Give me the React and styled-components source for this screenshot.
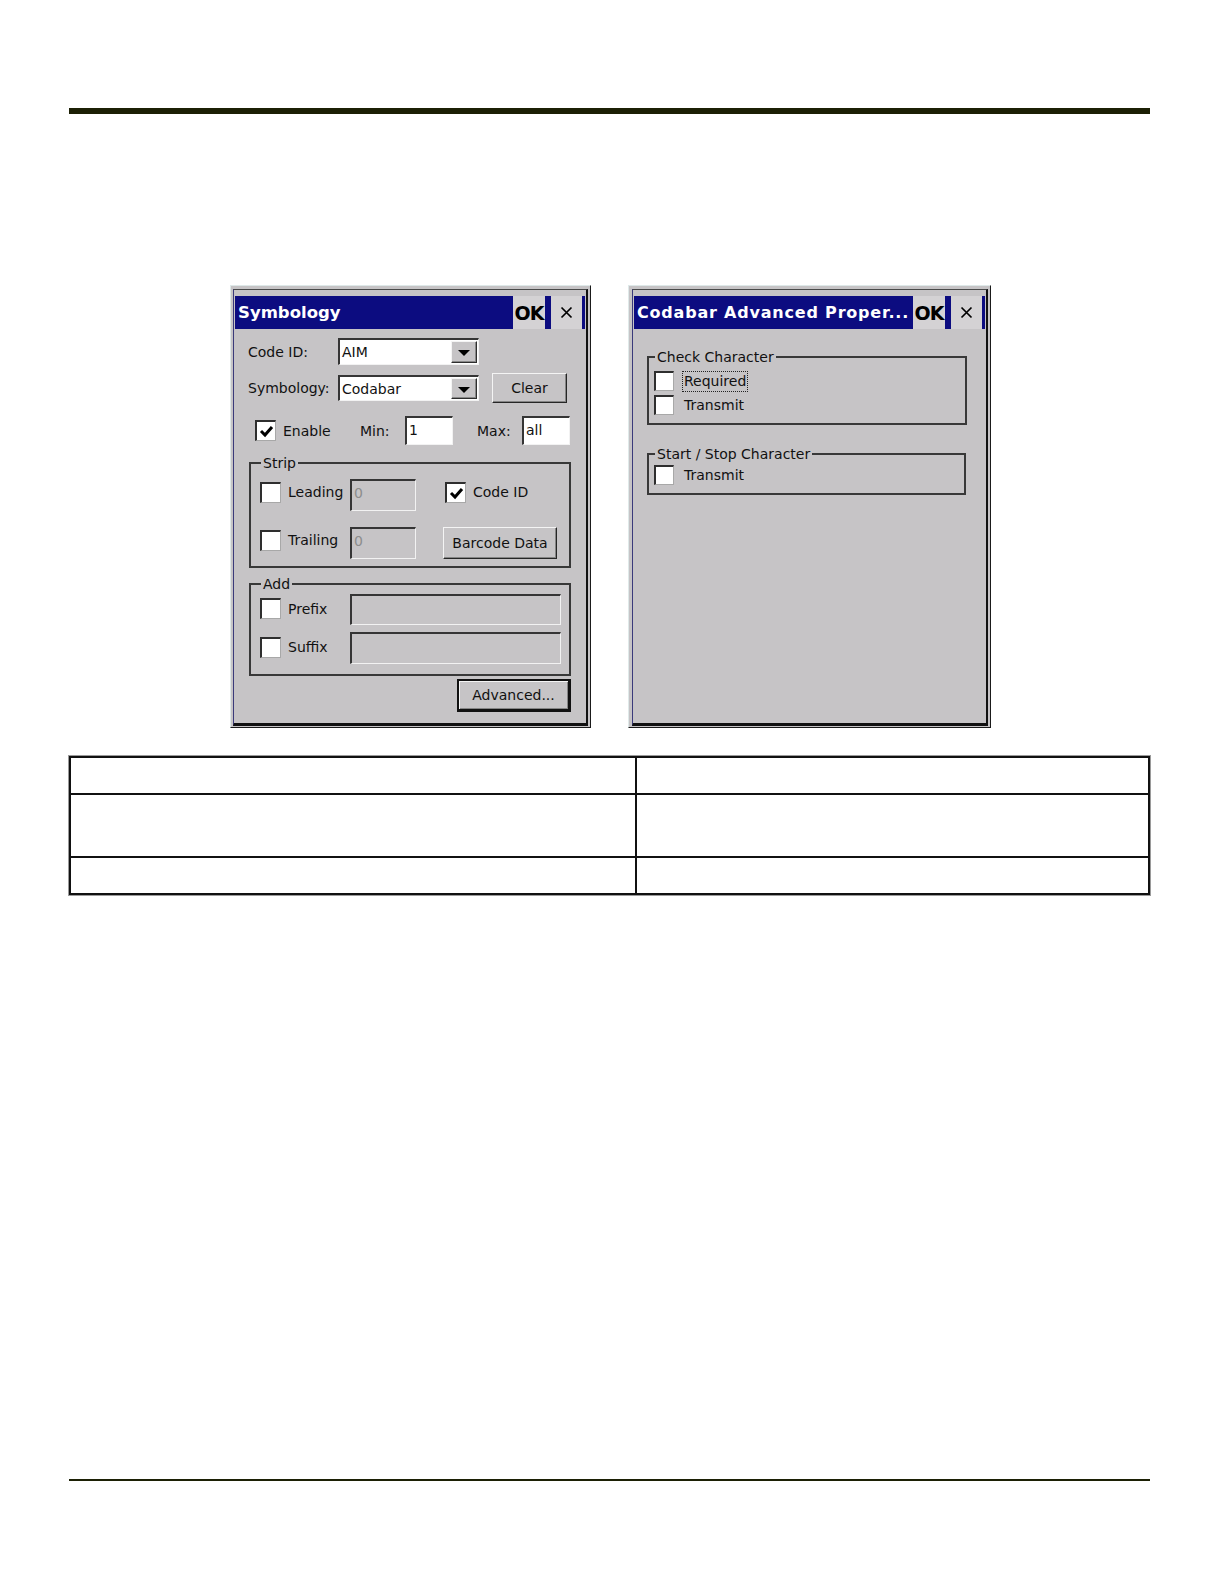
import React from 'react';
import styled, { createGlobalStyle, css } from 'styled-components';

const GlobalStyle = createGlobalStyle`
  html, body {
    margin: 0;
    padding: 0;
    background: #fff;
  }
  body {
    font-family: "DejaVu Sans", "Liberation Sans", sans-serif;
    color: #111;
  }
`;

const FACE = '#c6c4c6';

// page
const Page = styled.div`
  width: 1224px;
  height: 1584px;
  display: flex;
  flex-direction: column;
  background: #fff;
`;

const Rule = styled.div`
  margin: ${p => p.$mt}px 0 0 69px;
  width: 1081px;
  height: ${p => p.$h}px;
  background: #1c2005;
  flex-shrink: 0;
`;

const Shots = styled.div`
  display: flex;
  align-items: flex-start;
  gap: 37px;
  margin: 171px 0 0 230px;
`;

// window chrome
const Window = styled.div`
  box-sizing: border-box;
  width: ${p => p.$w}px;
  height: 443px;
  background: ${FACE};
  border: 1px solid;
  border-color: #dfe9e9 #1a1a1a #1a1a1a #dfe9e9;
  padding: 3px 2px 1px ${p => 2 + (p.$padLeft || 0)}px;
  display: flex;
`;

const Frame = styled.div`
  flex: 1;
  display: flex;
  flex-direction: column;
  border-style: solid;
  border-color: #4a4a4a #111 #111 #3a3a7a;
  border-width: 1px 2px 3px 1px;
  padding: 6px 1px 0 1px;
`;

const TitleBar = styled.div`
  display: flex;
  align-items: stretch;
  height: 33px;
  flex-shrink: 0;
  background: #0c0c80;
  padding: 0 3px 0 3px;
`;

const TitleText = styled.span`
  flex: 1;
  display: flex;
  align-items: center;
  color: #fff;
  font-size: ${p => p.$size || 16}px;
  font-weight: bold;
  letter-spacing: ${p => p.$spacing || 0}px;
  white-space: nowrap;
  overflow: hidden;
`;

const CapButton = styled.span`
  width: ${p => p.$w}px;
  margin-left: ${p => p.$ml}px;
  display: flex;
  align-items: center;
  justify-content: center;
  background: #d4d2d4;
  color: #000;
  font-size: 19px;
  font-weight: bold;
  letter-spacing: -1px;
  flex-shrink: 0;
`;

const Body = styled.div`
  flex: 1;
  display: flex;
  flex-direction: column;
`;

// controls
const FormRow = styled.div`
  display: flex;
  align-items: center;
  height: ${p => p.$h}px;
  margin: ${p => p.$mt || 0}px 0 0 ${p => p.$ml || 0}px;
`;

const Label = styled.span`
  flex-shrink: 0;
  width: ${p => (p.$w ? `${p.$w}px` : 'auto')};
  margin-left: ${p => p.$ml || 0}px;
  margin-bottom: ${p => (p.$lift ? p.$lift * 2 : 0)}px;
  font-size: 14px;
  white-space: nowrap;
  ${p => p.$focus && css`
    border: 1px dotted #222;
    padding: 0 1px;
    line-height: 19px;
  `}
`;

const sunken = css`
  box-sizing: border-box;
  border-style: solid;
  border-width: 2px 1px 1px 2px;
  border-color: #353535 #f2f2f2 #f2f2f2 #353535;
`;

const Combo = styled.div`
  ${sunken};
  width: 141px;
  height: ${p => p.$h}px;
  display: flex;
  background: #fff;
  flex-shrink: 0;
`;

const ComboText = styled.span`
  flex: 1;
  display: flex;
  align-items: center;
  padding-left: 2px;
  font-size: 14px;
`;

const ComboArrow = styled.span`
  width: 24px;
  margin: 1px 1px 1px 0;
  display: flex;
  align-items: center;
  justify-content: center;
  background: ${FACE};
  border: 1px solid;
  border-color: #f4f4f4 #2e2e2e #2e2e2e #f4f4f4;
  box-shadow: inset -1px -1px 0 #888;

  &::after {
    content: '';
    border-left: 6px solid transparent;
    border-right: 6px solid transparent;
    border-top: 6px solid #000;
    margin-top: 2px;
  }
`;

const Field = styled.div`
  ${sunken};
  width: ${p => p.$w}px;
  height: ${p => p.$h}px;
  flex-shrink: 0;
  padding: 4px 0 0 2px;
  font-size: 14px;
  background: ${p => (p.$disabled ? FACE : '#fff')};
  color: ${p => (p.$disabled ? '#8d8d8d' : '#111')};
`;

const Button = styled.div`
  box-sizing: border-box;
  width: ${p => p.$w}px;
  height: ${p => p.$h}px;
  margin-left: ${p => p.$ml || 0}px;
  flex-shrink: 0;
  display: flex;
  align-items: center;
  justify-content: center;
  font-size: 14px;
  background: ${FACE};
  border: 1px solid;
  border-color: #f4f4f4 #262626 #262626 #f4f4f4;
  box-shadow: inset -1px -1px 0 #858585;
  ${p => p.$default && css`
    border: 2px solid #111;
    border-right-width: 3px;
    border-bottom-width: 3px;
    box-shadow: inset 1px 1px 0 #f4f4f4, inset -1px -1px 0 #858585;
  `}
`;

const AdvancedWrap = styled.div`
  display: flex;
  justify-content: flex-end;
  margin: 3px 14px 0 0;
`;

const Box = styled.span`
  box-sizing: border-box;
  flex-shrink: 0;
  width: ${p => p.$size}px;
  height: ${p => p.$size}px;
  margin-left: ${p => p.$ml || 0}px;
  margin-bottom: ${p => (p.$lift ? p.$lift * 2 : 0)}px;
  display: flex;
  align-items: center;
  justify-content: center;
  background: #fff;
  border-style: solid;
  border-width: 2px 1px 1px 2px;
  border-color: #2e2e2e #a8a8a8 #a8a8a8 #2e2e2e;
`;

const CheckBox = ({ checked, size = 21, ml, lift }) => (
  <Box $size={size} $ml={ml} $lift={lift}>
    {checked && (
      <svg width="15" height="14" viewBox="0 0 15 14">
        <polyline points="2,7 6,11 13,3" fill="none" stroke="#000" strokeWidth="3" />
      </svg>
    )}
  </Box>
);

const Group = styled.fieldset`
  box-sizing: border-box;
  min-width: 0;
  width: ${p => p.$w}px;
  margin: ${p => p.$mt}px 0 0 ${p => p.$ml}px;
  padding: ${p => p.$pad};
  border: 2px solid #383838;
`;

const Legend = styled.legend`
  margin-left: 1px;
  padding: 0 2px;
  font-size: 14px;
  line-height: 16px;
`;

const CloseGlyph = () => (
  <svg width="13" height="13" viewBox="0 0 13 13">
    <path d="M1.5 1.5 L11.5 11.5 M11.5 1.5 L1.5 11.5" stroke="#000" strokeWidth="1.7" />
  </svg>
);

const TitleButtons = () => (
  <>
    <CapButton $w={32} $ml={0}>OK</CapButton>
    <CapButton $w={31} $ml={6}><CloseGlyph /></CapButton>
  </>
);

// table under the shots
const Table = styled.table`
  margin: 28px 0 0 69px;
  width: 1081px;
  border-collapse: collapse;
  table-layout: fixed;
  box-shadow: 0 0 0 1px #9a9a9a;
`;

const Cell = styled.td`
  height: ${p => p.$h}px;
  padding: 0;
  border: 2px solid #111;
  border-left-color: ${p => (p.$first ? '#111' : '#333')};
  border-left-width: ${p => (p.$first ? 2 : 1)}px;
`;

const SymbologyDialog = () => (
  <Window $w={361}>
    <Frame>
      <TitleBar>
        <TitleText $size={16.5}>Symbology</TitleText>
        <TitleButtons />
      </TitleBar>
      <Body>
        <FormRow $mt={9} $ml={13} $h={27}>
          <Label $w={90}>Code ID:</Label>
          <Combo $h={27}>
            <ComboText>AIM</ComboText>
            <ComboArrow />
          </Combo>
        </FormRow>
        <FormRow $mt={8} $ml={13} $h={30}>
          <Label $w={90}>Symbology:</Label>
          <Combo $h={26}>
            <ComboText>Codabar</ComboText>
            <ComboArrow />
          </Combo>
          <Button $ml={13} $w={75} $h={30}>Clear</Button>
        </FormRow>
        <FormRow $mt={13} $ml={20} $h={29}>
          <CheckBox checked />
          <Label $ml={7} $w={77}>Enable</Label>
          <Label $w={45}>Min:</Label>
          <Field $w={48} $h={29}>1</Field>
          <Label $ml={24} $w={45}>Max:</Label>
          <Field $w={48} $h={29}>all</Field>
        </FormRow>

        <Group $mt={10} $ml={14} $w={322} $pad="8px 0 7px 9px">
          <Legend>Strip</Legend>
          <FormRow $h={32}>
            <CheckBox lift={3} />
            <Label $ml={7} $w={62} $lift={3}>Leading</Label>
            <Field $w={66} $h={32} $disabled>0</Field>
            <CheckBox checked ml={29} lift={3} />
            <Label $ml={7} $lift={3}>Code ID</Label>
          </FormRow>
          <FormRow $mt={16} $h={32}>
            <CheckBox lift={3} />
            <Label $ml={7} $w={62} $lift={3}>Trailing</Label>
            <Field $w={66} $h={32} $disabled>0</Field>
            <Button $ml={27} $w={114} $h={32}>Barcode Data</Button>
          </FormRow>
        </Group>

        <Group $mt={8} $ml={14} $w={322} $pad="2px 0 10px 9px">
          <Legend>Add</Legend>
          <FormRow $h={31}>
            <CheckBox lift={1} />
            <Label $ml={7} $w={62} $lift={1}>Prefix</Label>
            <Field $w={211} $h={31} $disabled />
          </FormRow>
          <FormRow $mt={7} $h={32}>
            <CheckBox lift={1} />
            <Label $ml={7} $w={62} $lift={1}>Suffix</Label>
            <Field $w={211} $h={32} $disabled />
          </FormRow>
        </Group>

        <AdvancedWrap>
          <Button $default $w={114} $h={33}>Advanced...</Button>
        </AdvancedWrap>
      </Body>
    </Frame>
  </Window>
);

const AdvancedDialog = () => (
  <Window $w={363} $padLeft={1}>
    <Frame>
      <TitleBar>
        <TitleText $spacing={0.8}>Codabar Advanced Proper...</TitleText>
        <TitleButtons />
      </TitleBar>
      <Body>
        <Group $mt={20} $ml={13} $w={320} $pad="4px 0 6px 5px">
          <Legend>Check Character</Legend>
          <FormRow $h={24}>
            <CheckBox size={20} />
            <Label $ml={8} $focus>Required</Label>
          </FormRow>
          <FormRow $h={24}>
            <CheckBox size={20} />
            <Label $ml={10}>Transmit</Label>
          </FormRow>
        </Group>
        <Group $mt={21} $ml={13} $w={319} $pad="1px 0 6px 5px">
          <Legend>Start / Stop Character</Legend>
          <FormRow $h={24}>
            <CheckBox size={20} />
            <Label $ml={10}>Transmit</Label>
          </FormRow>
        </Group>
      </Body>
    </Frame>
  </Window>
);

const App = () => (
  <Page>
    <GlobalStyle />
    <Rule $mt={108} $h={6} />
    <Shots>
      <SymbologyDialog />
      <AdvancedDialog />
    </Shots>
    <Table>
      <colgroup>
        <col style={{ width: 566 }} />
        <col />
      </colgroup>
      <tbody>
        <tr>
          <Cell $first $h={35} />
          <Cell $h={35} />
        </tr>
        <tr>
          <Cell $first $h={61} />
          <Cell $h={61} />
        </tr>
        <tr>
          <Cell $first $h={35} />
          <Cell $h={35} />
        </tr>
      </tbody>
    </Table>
    <Rule $mt={584} $h={2} />
  </Page>
);

export default App;
